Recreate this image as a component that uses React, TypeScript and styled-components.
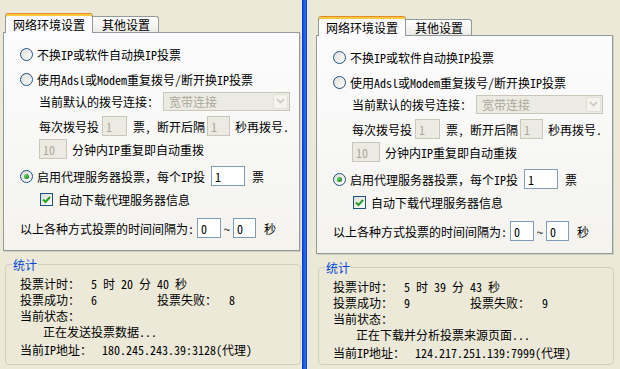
import React from 'react';
import styled, { createGlobalStyle } from 'styled-components';

const GlobalStyle = createGlobalStyle`
  html, body {
    margin: 0;
    padding: 0;
    background: #ece9d8;
  }
  body {
    font-family: "Noto Sans Mono CJK SC", "Noto Sans CJK SC", sans-serif;
    font-size: 12px;
    color: #000;
  }
`;

const Screen = styled.div`
  width: 620px;
  height: 369px;
  overflow: hidden;
  display: flex;
  background: #ece9d8;
`;

const Window = styled.div<{ $width: number; $left: number; $top: number }>`
  flex: none;
  width: ${p => p.$width}px;
  box-sizing: border-box;
  padding: ${p => p.$top}px 0 0 ${p => p.$left}px;
`;

const Divider = styled.div`
  flex: none;
  width: 5px;
  background: linear-gradient(to right, #0831d9 0%, #1a5fe6 45%, #2a6cf0 65%, #0a3cd8 100%);
`;

const TabStrip = styled.div`
  display: flex;
  align-items: flex-end;
  padding-left: 2px;
`;

const ActiveTab = styled.div`
  position: relative;
  z-index: 1;
  height: 20px;
  box-sizing: border-box;
  margin-bottom: -1px;
  padding: 2px 7px 0;
  display: flex;
  align-items: center;
  background: #fcfcfe;
  border: 1px solid #919b9c;
  border-top-color: #e68b2c;
  border-bottom: none;
  border-radius: 3px 3px 0 0;
  box-shadow: inset 0 2px 0 #ffc83c;
`;

const Tab = styled.div`
  height: 16px;
  box-sizing: border-box;
  padding: 0 8px 0 9px;
  display: flex;
  align-items: center;
  background: linear-gradient(#ffffff, #ecebe6);
  border: 1px solid #919b9c;
  border-left: none;
  border-bottom: none;
  border-radius: 0 3px 0 0;
`;

const Pane = styled.div`
  width: 297px;
  box-sizing: border-box;
  padding: 11px 0 12px;
  background: linear-gradient(#fcfcfe, #f4f3ee);
  border: 1px solid #919b9c;
  box-shadow: 1px 1px 0 #d0cfc4;
`;

const Row = styled.div<{ $mt?: number; $indent: number }>`
  display: flex;
  align-items: center;
  height: 20px;
  margin-top: ${p => p.$mt ?? 0}px;
  padding-left: ${p => p.$indent}px;
  white-space: nowrap;
`;

const Radio = styled.span<{ $checked?: boolean }>`
  flex: none;
  width: 13px;
  height: 13px;
  box-sizing: border-box;
  margin-right: 4px;
  border: 1px solid #1c5180;
  border-radius: 50%;
  background: linear-gradient(135deg, #dcdcd7, #ffffff);
  display: flex;
  align-items: center;
  justify-content: center;

  &::after {
    content: '';
    display: ${p => (p.$checked ? 'block' : 'none')};
    width: 5px;
    height: 5px;
    border-radius: 50%;
    background: radial-gradient(circle at 35% 35%, #6ad66a, #1e8a1e 70%);
  }
`;

const Check = styled.span`
  flex: none;
  width: 13px;
  height: 13px;
  box-sizing: border-box;
  margin-right: 5px;
  border: 1px solid #1c5180;
  background: linear-gradient(135deg, #dcdcd7, #ffffff);
  display: flex;
  align-items: center;
  justify-content: center;
`;

const Field = styled.input<{ $w: number; $ml?: number; $mr?: number }>`
  flex: none;
  width: ${p => p.$w}px;
  height: 20px;
  box-sizing: border-box;
  margin: 0 ${p => p.$mr ?? 0}px 0 ${p => p.$ml ?? 0}px;
  padding: 0 0 0 3px;
  font: inherit;
  color: #000;
  background: #fff;
  border: 1px solid #7f9db9;
  outline: none;

  &:disabled {
    color: #aca899;
    background: #ebebe4;
    border-color: #c9c7ba;
  }
`;

const Combo = styled.div`
  flex: none;
  width: 127px;
  height: 19px;
  box-sizing: border-box;
  margin-left: 4px;
  display: flex;
  align-items: center;
  justify-content: space-between;
  border: 1px solid #c9c7ba;
  background: #ebebe4;
  color: #aca899;
  padding-left: 5px;
`;

const ComboButton = styled.span`
  width: 15px;
  height: 15px;
  margin-right: 1px;
  box-sizing: border-box;
  border: 1px solid #e3e1d6;
  border-radius: 2px;
  background: #f4f3ee;
  display: flex;
  align-items: center;
  justify-content: center;
`;

const Group = styled.fieldset`
  width: 296px;
  box-sizing: border-box;
  margin: 7px 0 0 2px;
  padding: 0;
  border: 1px solid #d0d0bf;
  border-radius: 4px;
`;

const Legend = styled.legend`
  margin-left: 6px;
  padding: 0 1px;
  line-height: 13px;
  color: #0046d5;
`;

const StatsBody = styled.div<{ $pb: number }>`
  padding: 5px 0 ${p => p.$pb}px 14px;
`;

const StatRow = styled.div<{ $mt?: number; $indent?: number }>`
  display: flex;
  line-height: 16px;
  margin-top: ${p => p.$mt ?? 0}px;
  padding-left: ${p => p.$indent ?? 0}px;
  white-space: nowrap;
`;

const Cell = styled.span<{ $w: number }>`
  flex: none;
  width: ${p => p.$w}px;
`;

interface PanelData {
  width: number;
  left: number;
  top: number;
  bottom: number;
  timer: string;
  ok: string;
  fail: string;
  status: string;
  ip: string;
}

const Chevron = () => (
  <svg width="9" height="6" viewBox="0 0 9 6">
    <polyline points="1,1 4.5,4.5 8,1" fill="none" stroke="#c9c7ba" strokeWidth="1.6" />
  </svg>
);

const Tick = () => (
  <svg width="11" height="11" viewBox="0 0 11 11">
    <polyline points="2,5.5 4.5,8 9,3" fill="none" stroke="#21a121" strokeWidth="2" />
  </svg>
);

const VotePanel: React.FC<{ data: PanelData }> = ({ data }) => (
  <Window $width={data.width} $left={data.left} $top={data.top}>
    <TabStrip>
      <ActiveTab>网络环境设置</ActiveTab>
      <Tab>其他设置</Tab>
    </TabStrip>
    <Pane>
      <Row $indent={16}>
        <Radio />
        不换IP或软件自动换IP投票
      </Row>
      <Row $indent={16} $mt={5}>
        <Radio />
        使用Adsl或Modem重复拨号/断开换IP投票
      </Row>
      <Row $indent={35} $mt={2}>
        当前默认的拨号连接：
        <Combo>
          宽带连接
          <ComboButton>
            <Chevron />
          </ComboButton>
        </Combo>
      </Row>
      <Row $indent={35} $mt={5}>
        每次拨号投
        <Field $w={25} $ml={3} $mr={6} value="1" disabled readOnly />
        票, 断开后隔
        <Field $w={23} $ml={2} $mr={5} value="1" disabled readOnly />
        秒再拨号.
      </Row>
      <Row $indent={35} $mt={3}>
        <Field $w={28} $mr={5} value="10" disabled readOnly />
        分钟内IP重复即自动重拨
      </Row>
      <Row $indent={16} $mt={7}>
        <Radio $checked />
        启用代理服务器投票，每个IP投
        <Field $w={34} $ml={6} $mr={7} value="1" readOnly />
        票
      </Row>
      <Row $indent={36} $mt={3}>
        <Check>
          <Tick />
        </Check>
        自动下载代理服务器信息
      </Row>
      <Row $indent={16} $mt={9}>
        以上各种方式投票的时间间隔为:
        <Field $w={24} $ml={3} $mr={3} value="0" readOnly />
        ~
        <Field $w={23} $ml={3} $mr={8} value="0" readOnly />
        秒
      </Row>
    </Pane>
    <Group>
      <Legend>统计</Legend>
      <StatsBody $pb={data.bottom}>
        <StatRow>
          <Cell $w={71}>投票计时：</Cell>
          {data.timer}
        </StatRow>
        <StatRow>
          <Cell $w={71}>投票成功：</Cell>
          <Cell $w={66}>{data.ok}</Cell>
          <Cell $w={72}>投票失败：</Cell>
          {data.fail}
        </StatRow>
        <StatRow>当前状态：</StatRow>
        <StatRow $indent={23}>{data.status}</StatRow>
        <StatRow $mt={2}>
          <Cell $w={82}>当前IP地址：</Cell>
          {data.ip}
        </StatRow>
      </StatsBody>
    </Group>
  </Window>
);

const panels: PanelData[] = [
  {
    width: 302,
    left: 3,
    top: 13,
    bottom: 6,
    timer: '5 时 20 分 40 秒',
    ok: '6',
    fail: '8',
    status: '正在发送投票数据...',
    ip: '180.245.243.39:3128(代理)',
  },
  {
    width: 313,
    left: 9,
    top: 16,
    bottom: 3,
    timer: '5 时 39 分 43 秒',
    ok: '9',
    fail: '9',
    status: '正在下载并分析投票来源页面...',
    ip: '124.217.251.139:7999(代理)',
  },
];

export default function App() {
  return (
    <>
      <GlobalStyle />
      <Screen>
        <VotePanel data={panels[0]} />
        <Divider />
        <VotePanel data={panels[1]} />
      </Screen>
    </>
  );
}
